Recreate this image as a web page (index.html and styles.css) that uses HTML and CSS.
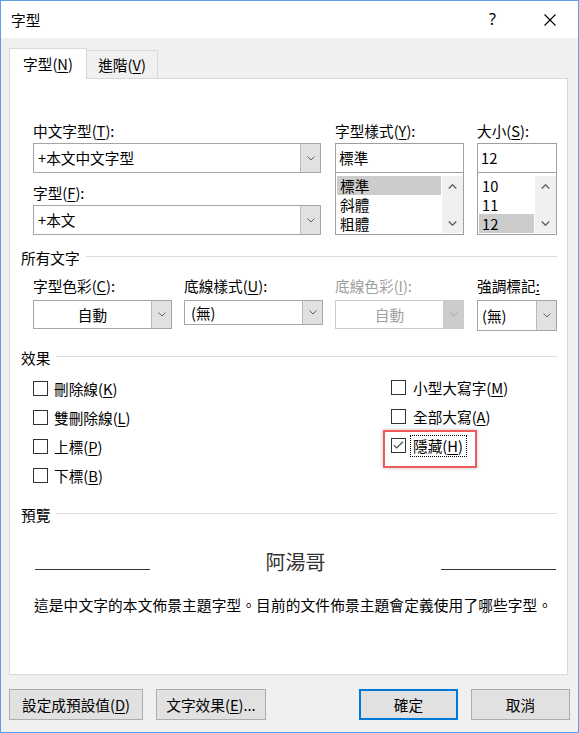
FILE: index.html
```html
<!DOCTYPE html>
<html lang="zh-Hant">
<head>
<meta charset="utf-8">
<title>字型</title>
<link rel="stylesheet" href="styles.css">
</head>
<body>
<div class="window">
  <div class="titlebar">
    <span class="title">字型</span>
    <span class="help">?</span>
    <span class="close"><svg width="12" height="12" viewBox="0 0 12 12"><path d="M0.5 0.5 L11.5 11.5 M11.5 0.5 L0.5 11.5" stroke="#000" stroke-width="1.1" fill="none"/></svg></span>
  </div>

  <div class="tabs">
    <div class="tab active">字型(<u>N</u>)</div>
    <div class="tab">進階(<u>V</u>)</div>
  </div>

  <div class="panel">
    <div class="font-grid">
      <div class="col col-name">
        <div class="label">中文字型(<u>T</u>):</div>
        <div class="combo h30"><span class="field">+本文中文字型</span><span class="dd"><svg width="8" height="5" viewBox="0 0 8 5"><polyline points="0.5,0.5 4,4 7.5,0.5" fill="none" stroke="#606060" stroke-width="1"/></svg></span></div>
        <div class="label gap">字型(<u>F</u>):</div>
        <div class="combo h30"><span class="field">+本文</span><span class="dd"><svg width="8" height="5" viewBox="0 0 8 5"><polyline points="0.5,0.5 4,4 7.5,0.5" fill="none" stroke="#606060" stroke-width="1"/></svg></span></div>
      </div>

      <div class="col col-style">
        <div class="label">字型樣式(<u>Y</u>):</div>
        <div class="textbox">標準</div>
        <div class="listbox">
          <div class="items">
            <div class="item selected">標準</div>
            <div class="item">斜體</div>
            <div class="item">粗體</div>
          </div>
          <div class="scrollbar">
            <span class="sb-btn"><svg width="9" height="5" viewBox="0 0 9 5"><polyline points="0.8,4.4 4.5,0.8 8.2,4.4" fill="none" stroke="#606060" stroke-width="1.4"/></svg></span>
            <span class="sb-btn"><svg width="9" height="5" viewBox="0 0 9 5"><polyline points="0.8,0.6 4.5,4.2 8.2,0.6" fill="none" stroke="#606060" stroke-width="1.4"/></svg></span>
          </div>
        </div>
      </div>

      <div class="col col-size">
        <div class="label">大小(<u>S</u>):</div>
        <div class="textbox">12</div>
        <div class="listbox">
          <div class="items">
            <div class="item">10</div>
            <div class="item">11</div>
            <div class="item selected">12</div>
          </div>
          <div class="scrollbar">
            <span class="sb-btn"><svg width="9" height="5" viewBox="0 0 9 5"><polyline points="0.8,4.4 4.5,0.8 8.2,4.4" fill="none" stroke="#606060" stroke-width="1.4"/></svg></span>
            <span class="sb-btn"><svg width="9" height="5" viewBox="0 0 9 5"><polyline points="0.8,0.6 4.5,4.2 8.2,0.6" fill="none" stroke="#606060" stroke-width="1.4"/></svg></span>
          </div>
        </div>
      </div>
    </div>

    <div class="section-title t-all">所有文字</div>

    <div class="row2">
      <div class="c-a">
        <div class="label l2">字型色彩(<u>C</u>):</div>
        <div class="combo h29"><span class="field center">自動</span><span class="dd"><svg width="8" height="5" viewBox="0 0 8 5"><polyline points="0.5,0.5 4,4 7.5,0.5" fill="none" stroke="#606060" stroke-width="1"/></svg></span></div>
      </div>
      <div class="c-b">
        <div class="label l2">底線樣式(<u>U</u>):</div>
        <div class="combo h25"><span class="field wide">(無)</span><span class="dd"><svg width="8" height="5" viewBox="0 0 8 5"><polyline points="0.5,0.5 4,4 7.5,0.5" fill="none" stroke="#606060" stroke-width="1"/></svg></span></div>
      </div>
      <div class="c-c disabled">
        <div class="label l2">底線色彩(<u>I</u>):</div>
        <div class="combo h29"><span class="field center">自動</span><span class="dd"><svg width="8" height="5" viewBox="0 0 8 5"><polyline points="0.5,0.5 4,4 7.5,0.5" fill="none" stroke="#a8a8a8" stroke-width="1"/></svg></span></div>
      </div>
      <div class="c-d">
        <div class="label l2">強調標記<u>:</u></div>
        <div class="combo h31"><span class="field">(無)</span><span class="dd"><svg width="8" height="5" viewBox="0 0 8 5"><polyline points="0.5,0.5 4,4 7.5,0.5" fill="none" stroke="#606060" stroke-width="1"/></svg></span></div>
      </div>
    </div>

    <div class="section-title t-eff">效果</div>

    <div class="effects">
      <div class="eff-left">
        <div class="check-row"><span class="box"></span><span class="clabel">刪除線(<u>K</u>)</span></div>
        <div class="check-row"><span class="box"></span><span class="clabel">雙刪除線(<u>L</u>)</span></div>
        <div class="check-row"><span class="box"></span><span class="clabel">上標(<u>P</u>)</span></div>
        <div class="check-row"><span class="box"></span><span class="clabel">下標(<u>B</u>)</span></div>
      </div>
      <div class="eff-right">
        <div class="check-row"><span class="box"></span><span class="clabel">小型大寫字(<u>M</u>)</span></div>
        <div class="check-row"><span class="box"></span><span class="clabel">全部大寫(<u>A</u>)</span></div>
        <div class="check-row">
          <span class="box"><svg width="13" height="13" viewBox="0 0 13 13"><polyline points="1.8,6.2 4.6,9 11,2.8" fill="none" stroke="#4a4a4a" stroke-width="1.2"/></svg></span>
          <span class="clabel focus">隱藏(<u>H</u>)</span>
          <span class="highlight"></span>
        </div>
      </div>
    </div>

    <div class="section-title t-prev">預覽</div>

    <div class="sample">
      <span class="rule"></span>
      <span class="sample-text">阿湯哥</span>
      <span class="rule"></span>
    </div>

    <div class="desc">這是中文字的本文佈景主題字型。目前的文件佈景主題會定義使用了哪些字型。</div>
  </div>

  <div class="buttons">
    <div class="btn b-default">設定成預設值(<u>D</u>)</div>
    <div class="btn b-effects">文字效果(<u>E</u>)...</div>
    <div class="btn b-ok">確定</div>
    <div class="btn b-cancel">取消</div>
  </div>
</div>
</body>
</html>
```

FILE: styles.css
```css
* { box-sizing: border-box; }
html, body { margin: 0; padding: 0; }
body {
  font-family: "Noto Sans CJK TC", "Noto Sans", sans-serif;
  font-size: 14.67px;
  line-height: 20px;
  color: #000;
  background: #fff;
}
u { text-decoration: underline; text-decoration-thickness: 1px; text-underline-offset: 2px; }

.window {
  width: 579px;
  height: 733px;
  border: 1px solid #5e9fe6;
  background: #f0f0f0;
  display: flex;
  flex-direction: column;
}

/* title bar */
.titlebar {
  height: 37px;
  flex: none;
  background: #fff;
  display: flex;
  align-items: center;
  padding-left: 10px;
}
.title { flex: 1; font-size: 14.67px; }
.help {
  font-family: "Noto Sans", sans-serif;
  font-size: 16px;
  width: 8px;
  margin-right: 47px;
  margin-top: -1px;
}
.close { width: 12px; height: 12px; margin-right: 22px; display: flex; }

/* tabs */
.tabs {
  margin-top: 10px;
  height: 30px;
  flex: none;
  display: flex;
  align-items: flex-end;
  padding-left: 8px;
}
.tab {
  height: 28px;
  width: 71px;
  border: 1px solid #d9d9d9;
  border-left: none;
  border-bottom: none;
  background: #f0f0f0;
  display: flex;
  align-items: center;
  justify-content: center;
}
.tab.active {
  height: 31px;
  width: 78px;
  margin-bottom: -1px;
  border-left: 1px solid #d9d9d9;
  background: #fff;
  position: relative;
  z-index: 1;
}

/* panel */
.panel {
  margin-left: 8px;
  width: 559px;
  height: 597px;
  flex: none;
  border: 1px solid #d9d9d9;
  background: #fff;
}

.font-grid { display: flex; padding: 42px 0 0 23px; }
.col-name { width: 288px; }
.col-style { width: 129px; margin-left: 14px; }
.col-size { width: 80px; margin-left: 13px; }

.label { height: 20px; margin-bottom: 2px; white-space: nowrap; }
.label.gap { margin-top: 10px; }
.label.l2 { margin-bottom: 4px; }

.combo {
  display: flex;
  border: 1px solid #a5a5a5;
  background: #fff;
}
.h25 { height: 25px; }
.h29 { height: 29px; }
.h30 { height: 30px; }
.h31 { height: 31px; }
.field {
  flex: 1;
  padding-left: 4px;
  display: flex;
  align-items: center;
  white-space: nowrap;
}
.field.center { justify-content: center; padding-left: 0; }
.field.wide { padding-left: 6px; }
.dd {
  width: 20px;
  background: #e1e1e1;
  border-left: 1px solid #b9b9b9;
  display: flex;
  align-items: center;
  justify-content: center;
}

.textbox {
  height: 30px;
  border: 1px solid #a0a0a0;
  padding-left: 3px;
  display: flex;
  align-items: center;
}
.listbox {
  height: 63px;
  margin-top: -1px;
  border: 1px solid #a0a0a0;
  display: flex;
  padding: 2px 0 1px 0;
  background: #fff;
}
.items { flex: 1; padding: 1px 1px 0 1px; }
.item { height: 19px; line-height: 19px; padding-left: 3px; white-space: nowrap; }
.item.selected { background: #cccccc; }
.scrollbar {
  width: 21px;
  margin-top: 1px;
  background: #f0f0f0;
  display: flex;
  flex-direction: column;
  justify-content: space-between;
}
.sb-btn { height: 20px; display: flex; align-items: center; justify-content: center; }

/* section headings */
.section-title {
  display: flex;
  align-items: center;
  height: 20px;
  padding: 0 10px 0 11px;
  white-space: nowrap;
}
.section-title::after {
  content: "";
  flex: 1;
  height: 1px;
  background: #dcdcdc;
  margin-left: 6px;
  margin-bottom: 3px;
}
.t-all { margin-top: 13px; }
.t-eff { margin-top: 17px; }
.t-prev { margin-top: 15px; }

/* all text row */
.row2 { display: flex; align-items: flex-start; padding-left: 23px; margin-top: 8px; }
.c-a { width: 139px; }
.c-b { width: 139px; margin-left: 12px; }
.c-c { width: 129px; margin-left: 12px; }
.c-d { width: 80px; margin-left: 13px; }
.disabled .label { color: #a0a0a0; }
.disabled .combo { border-color: #cccccc; }
.disabled .field { color: #a0a0a0; }
.disabled .dd { background: #cccccc; border-left-color: #cccccc; }

/* effects */
.effects { display: flex; align-items: flex-start; margin-top: 5px; }
.eff-left { width: 381px; padding-left: 23px; padding-top: 1px; }
.check-row { height: 29px; display: flex; align-items: center; position: relative; }
.box {
  width: 15px;
  height: 15px;
  flex: none;
  border: 1px solid #333;
  background: #fff;
  margin-right: 6px;
  display: flex;
}
.eff-right .box { margin-right: 7px; }
.clabel { white-space: nowrap; }
.clabel.focus {
  border: 1px dotted #000;
  padding: 0 3px 0 2px;
  margin-left: -3px;
}
.highlight {
  position: absolute;
  left: -8px;
  top: -1px;
  width: 94px;
  height: 38px;
  border: 2px solid #f05a5a;
  box-shadow: 0 0 4px rgba(0, 0, 0, 0.25);
  pointer-events: none;
}

/* preview */
.sample {
  display: flex;
  align-items: flex-start;
  margin-top: 23px;
  padding-left: 25px;
  width: 546px;
  height: 28px;
}
.rule { width: 115px; height: 1px; background: #333; margin-top: 21px; flex: none; }
.sample-text {
  flex: 1;
  text-align: center;
  font-size: 20px;
  line-height: 28px;
  color: #333;
}
.desc {
  margin-top: 19px;
  padding-left: 24px;
  letter-spacing: 0.15px;
  white-space: nowrap;
}

/* bottom buttons */
.buttons {
  display: flex;
  margin-top: 14px;
  height: 31px;
  flex: none;
  padding-left: 8px;
}
.btn {
  height: 31px;
  border: 1px solid #adadad;
  background: #e1e1e1;
  display: flex;
  align-items: center;
  justify-content: center;
  white-space: nowrap;
}
.b-default { width: 134px; }
.b-effects { width: 110px; margin-left: 13px; }
.b-ok { width: 99px; margin-left: auto; border: 2px solid #0078d7; }
.b-cancel { width: 99px; margin-left: 13px; margin-right: 8px; }
```
